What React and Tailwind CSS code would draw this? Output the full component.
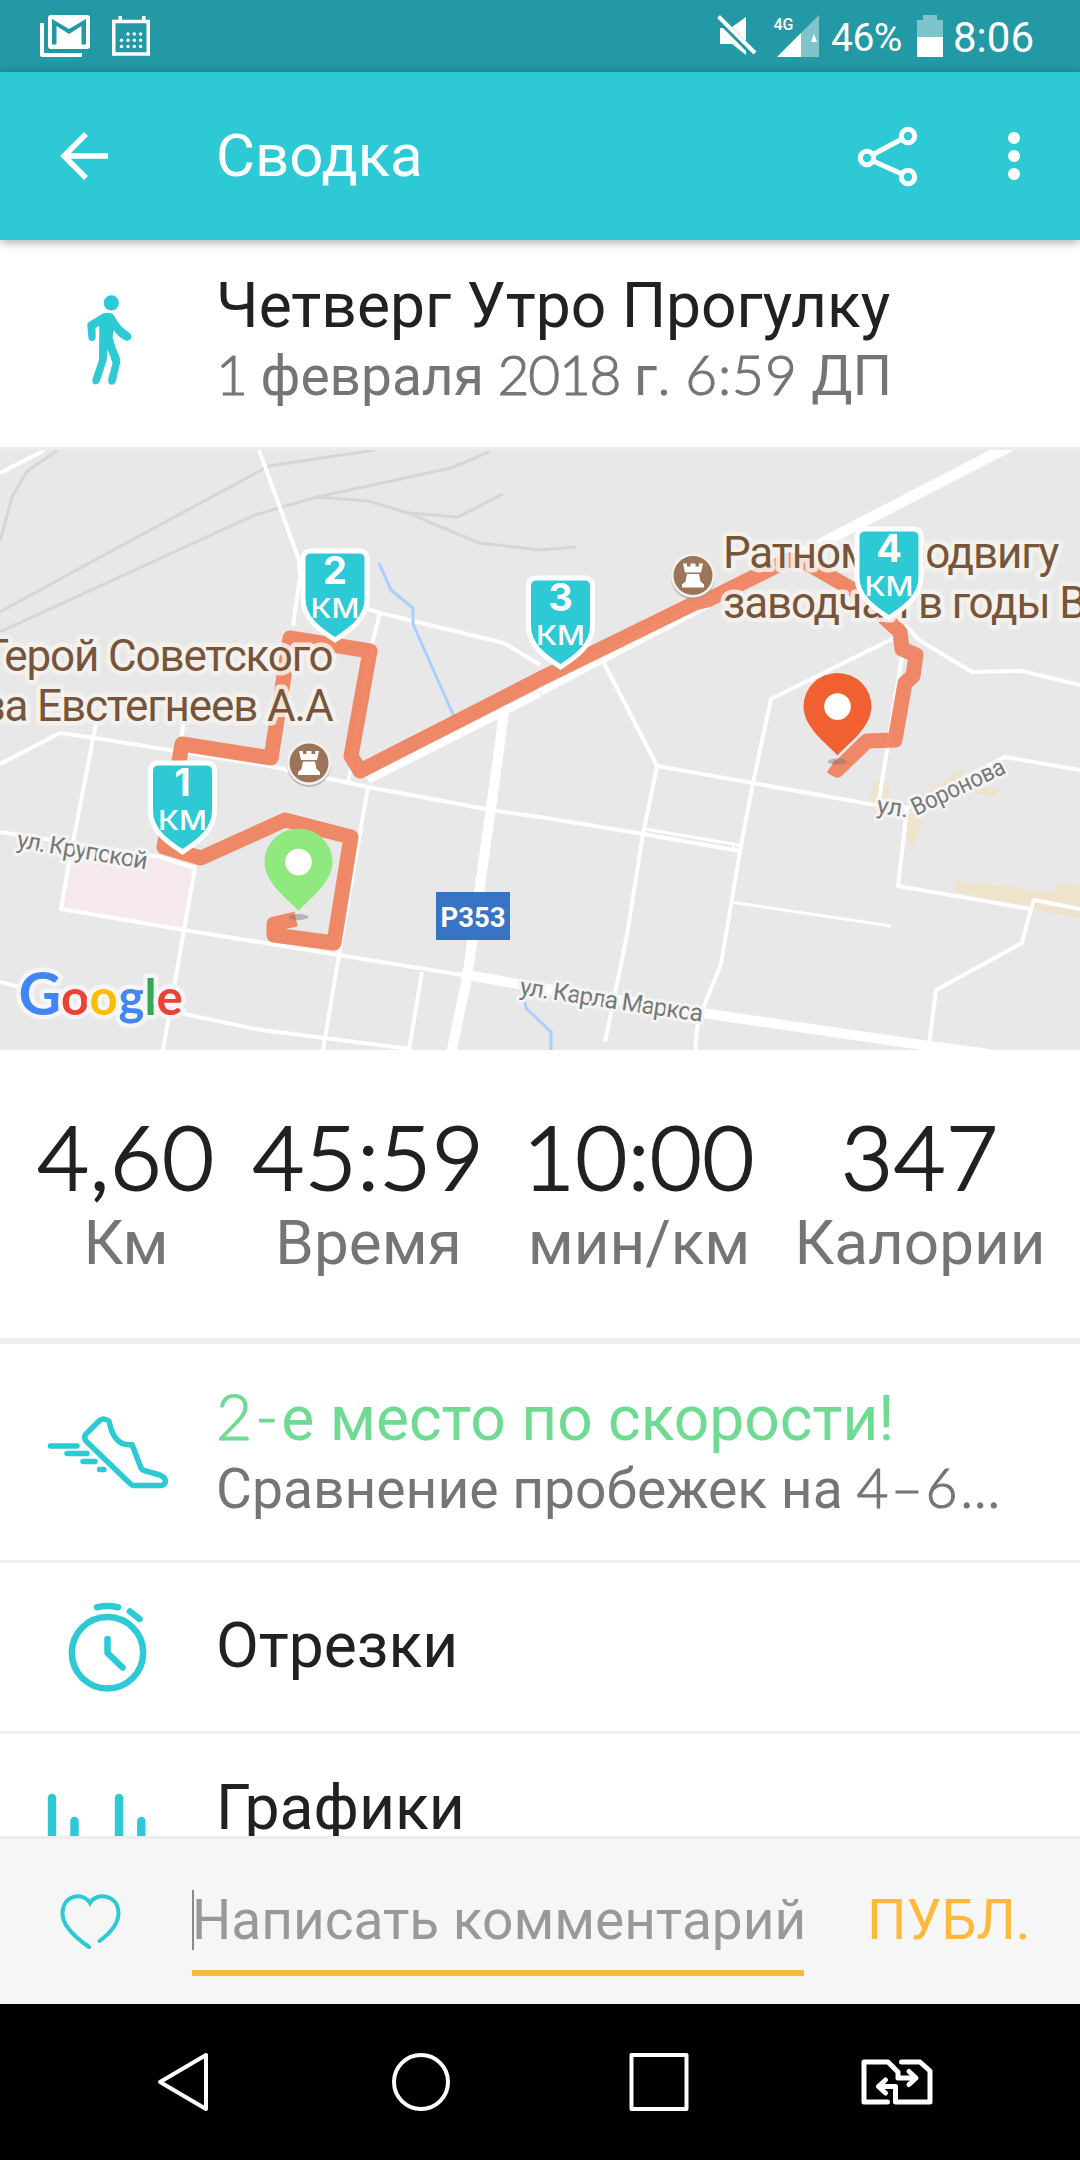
const CYAN = '#2dcad6'

const roads = [
  { w: 4, d: 'M0 473L45 450' },
  { w: 4, d: 'M259 450L299 560L300 576L293 626' },
  { w: 4, d: 'M368 609L380 613L504 643L540 665' },
  { w: 4, d: 'M380 613L373 640L348 784' },
  { w: 4, d: 'M0 764L60 733L95 738L269 766L368 787L491 810L540 817L643 834L740 851' },
  { w: 4, d: 'M98 713L69 863L61 909L184 930L339 955L462 975' },
  { w: 4, d: 'M0 832L160 857L195 868L184 930L163 1050' },
  { w: 4, d: 'M185 715L180 745' },
  { w: 4, d: 'M368 787L339 955L323 1050' },
  { w: 4, d: 'M422 972L409 1050' },
  { w: 4, d: 'M180 1013L255 1029L409 1049' },
  { w: 4, d: 'M0 982L24 988' },
  { w: 4, d: 'M604 663L657 766L643 834L627 935L605 1042' },
  { w: 4, d: 'M657 766L753 783L869 804L907 808L1005 757L1080 770' },
  { w: 4, d: 'M900 635L771 699L753 783L740 851L721 964L698 1021L695 1050' },
  { w: 3, d: 'M645 829L739 845M734 843L733 850' },
  { w: 3, d: 'M731 902L891 926' },
  { w: 4, d: 'M905 625L919 640L972 672L1022 671L1080 685' },
  { w: 4, d: 'M903 650L879 800' },
  { w: 4, d: 'M907 808L898 886L1031 909L1034 900L1080 909' },
  { w: 4, d: 'M1031 909L1022 943L936 990L929 1045' },
  { w: 8, d: 'M368 780L540 693' },
  { w: 11, d: 'M540 690L690 612L822 543L1010 446' },
  { w: 10, d: 'M505 705L491 808L467 978L451 1054' },
  { w: 10, d: 'M462 974L540 988L702 1013L929 1046L990 1054' },
]

const rails = [
  'M58 450L27 471L12 497L0 541',
  'M0 612L93 561L269 466L375 450',
  'M0 632L255 515L317 497L451 468L489 452',
  'M317 497L368 501L408 513L479 543L540 550L576 547',
  'M408 513L458 517L503 494',
]

const markers = [
  { n: '1', x: 182.5, y: 761 },
  { n: '2', x: 335, y: 549 },
  { n: '3', x: 560.5, y: 576 },
  { n: '4', x: 889, y: 527 },
]

const stats = [
  { value: '4,60', label: 'Км', width: 'w-[252px]' },
  { value: '45:59', label: 'Время', width: 'w-[233px]' },
  { value: '10:00', label: 'мин/км', width: 'w-[308px]' },
  { value: '347', label: 'Калории', width: 'w-[254px]' },
]

// Latin digits use a lighter face than the Cyrillic text
function Num({ children, className = '' }) {
  return <span className={`font-[Lato,sans-serif] font-light [-webkit-text-stroke:1.1px] ${className}`}>{children}</span>
}

function StatusBar() {
  return (
    <div className="h-[72px] bg-[#2499a6] flex items-center pl-10 pr-[46px] text-white">
      <svg className="w-[50px] h-[42px] shrink-0" viewBox="0 0 50 42">
        <path d="M2 8V40H42" fill="none" stroke="#fff" strokeWidth="4" strokeLinejoin="round" />
        <rect x="8" y="0" width="42" height="34" rx="3" fill="#fff" />
        <path d="M12 4L29 14L46 4V29.500H41.500V11L29 19L16.500 11V29.500H12Z" fill="#2499a6" />
      </svg>
      <svg className="w-[38px] h-10 ml-[22px] shrink-0" viewBox="0 0 38 40" fill="#fff">
        <rect x="1.750" y="5.500" width="34.500" height="32.500" fill="none" stroke="#fff" strokeWidth="3.500" />
        <rect x="6.500" y="0" width="3.500" height="6" />
        <rect x="30" y="0" width="3.500" height="6" />
        {[16, 22.3, 28.6].map((x) => <circle key={x} cx={x} cy="18" r="1.700" />)}
        {[9.5, 16, 22.3, 28.6].map((x) => (
          <g key={x}>
            <circle cx={x} cy="24.300" r="1.700" />
            <circle cx={x} cy="30.500" r="1.700" />
          </g>
        ))}
      </svg>
      <svg className="w-[104px] h-[42px] ml-auto shrink-0" viewBox="716 15 104 42">
        <path d="M719 28H722L745 51V55L731 44H719ZM731 27L745 17V41Z" fill="#fff" />
        <path d="M717.500 16.500L754 53" stroke="#fff" strokeWidth="4" />
        <path d="M776 57L818 15V57Z" fill="#fff" opacity="0.42" />
        <path d="M776 57L800 33V57Z" fill="#fff" />
        <path d="M810 42L813 34L816 42Z" fill="#fff" />
        <text x="772.500" y="30" fontSize="17" fontWeight="500" fill="#fff" textLength="20" lengthAdjust="spacingAndGlyphs">4G</text>
      </svg>
      <span className="ml-[10px] pt-1 text-[39px] leading-none w-[72px] tracking-[-0.5px]">46%</span>
      <svg className="w-[26px] h-[42px] ml-[14px] shrink-0" viewBox="0 0 26 42" fill="#fff">
        <path d="M6 0H20V5H26V22H0V5H6Z" opacity="0.42" />
        <rect y="22" width="26" height="20" />
      </svg>
      <span className="ml-[10px] pt-[3px] text-[42px] leading-none">8:06</span>
    </div>
  )
}

function AppBar() {
  return (
    <header className="relative z-10 h-[168px] bg-[#2dcad6] flex items-center pl-[60px] pr-[60px] shadow-[0_2px_10px_rgba(0,0,0,0.35)]">
      <svg className="w-12 h-12 shrink-0" viewBox="0 0 48 48" fill="none" stroke="#fff" strokeWidth="5.500">
        <path d="M26 2L4 24L26 46M3 24H48" />
      </svg>
      <h1 className="ml-[108px] text-[60px] leading-none text-white">Сводка</h1>
      <svg className="w-[60px] h-[62px] ml-auto shrink-0" viewBox="0 0 60 62" fill="none" stroke="#fff" strokeWidth="5">
        <circle cx="50" cy="11" r="6.700" />
        <circle cx="50" cy="52" r="6.700" />
        <circle cx="9" cy="33" r="6.700" />
        <path d="M15 29.500L44 14M15 36L44 49" />
      </svg>
      <svg className="w-3 h-12 ml-[90px] shrink-0" viewBox="0 0 12 48" fill="#fff">
        <circle cx="6" cy="6" r="6" />
        <circle cx="6" cy="24" r="6" />
        <circle cx="6" cy="42" r="6" />
      </svg>
    </header>
  )
}

function Summary() {
  return (
    <section className="h-[210px] border-b-[3px] border-[#ececec] flex">
      <div className="w-[216px] shrink-0 pt-[55px] pl-[86px]">
        <svg className="w-12 h-[92px]" viewBox="0 0 48 92" fill={CYAN}>
          <circle cx="25.300" cy="7.800" r="7.600" />
          <path d="M1.300 30Q1 28.300 3 27L17 18.500Q21 17 25 18.300Q27.500 19 29 22Q33 31 43.500 38Q47 41 44.500 44Q42 47 38.500 45Q31 41 28 35Q26.500 40 26.700 43Q29 52 33.500 62Q34.800 64.500 34 68L30 86Q28.500 90.500 24.500 89.500Q21.500 88.500 22.300 84L26.500 68Q24 60 21.300 54Q21.500 64 19.500 69L13.500 87Q11.500 90.500 8 89Q5.500 87.500 6.500 84L13 65L13.300 30.700L9.500 33L9.700 42Q9.500 46 6 46Q2.500 46 2.300 42Z" />
        </svg>
      </div>
      <div className="whitespace-nowrap">
        <h2 className="mt-[30px] text-[62.3px] leading-[72px] text-[#212121]">Четверг Утро Прогулку</h2>
        <p className="mt-[-3px] text-[55px] leading-[70px] text-[#757575]">
          <Num className="tracking-[-1px]">1</Num> февраля <Num className="tracking-[-1.2px]">2018</Num> г. <Num className="tracking-[0.9px]">6:59</Num> ДП
        </p>
      </div>
    </section>
  )
}

function Rook({ x, y }) {
  return (
    <g transform={`translate(${x} ${y})`}>
      <circle r="22" cy="2" fill="#999" opacity="0.6" />
      <circle r="22" fill="#f5f3f0" />
      <circle r="19.500" fill="#9c7459" />
      <path d="M-10 -12H-6V-9H-2.500V-12H2.500V-9H6V-12H10L8 -3H-8ZM-6 -1.500H6L7.500 6L11 9V12H-11V9L-7.500 6Z" fill="#fff" />
    </g>
  )
}

function Pin({ x, y, color }) {
  return (
    <g transform={`translate(${x} ${y})`}>
      <ellipse cy="6" rx="10" ry="3" fill="#777" opacity="0.45" />
      <path d="M0 0C-7 -9 -34 -27 -34 -49A34 33.500 0 0 1 34 -49C34 -27 7 -9 0 0Z" fill={color} />
      <circle cy="-49" r="13.300" fill="#fff" />
    </g>
  )
}

function KmMarker({ n, x, y }) {
  return (
    <g transform={`translate(${x} ${y})`} fill="#fff" textAnchor="middle" fontFamily="Inter, sans-serif">
      <path d="M-24 2H24Q32 2 32 10V50C32 72 10 84 0 91C-10 84 -32 72 -32 50V10Q-32 2 -24 2Z" fill={CYAN} stroke="#fff" strokeWidth="5" />
      <text y="35" fontSize="38" fontWeight="700">{n}</text>
      <text y="69" fontSize="27" fontWeight="500" textLength="49" lengthAdjust="spacingAndGlyphs">КМ</text>
    </g>
  )
}

function RouteMap() {
  return (
    <svg className="block w-[1080px] h-[600px]" viewBox="0 450 1080 600">
      <rect y="450" width="1080" height="600" fill="#e8e8e8" />
      <path d="M69 863L146 857L193 868L184 928L62 909Z" fill="#f6eaee" />
      <g fill="#f0e3cb">
        <path d="M874 780L890 783L888 800L869 812Z" />
        <path d="M908 814H921L916 845L907 844Z" />
        <path d="M905 808L960 769L967 776L970 788H1000L996 798L967 792L919 816Z" />
        <path d="M956 881L998 885L1053 893L1058 883L1080 885V919L953 891Z" />
      </g>
      <g fill="none" stroke="#d6d6d6" strokeWidth="3">
        {rails.map((d) => <path key={d} d={d} />)}
      </g>
      <g fill="none" stroke="#fff" strokeLinejoin="round">
        {roads.map((r) => <path key={r.d} d={r.d} strokeWidth={r.w} />)}
      </g>
      <path d="M379 563L391 590L413 608V624L456 721M523 990L526 1008L551 1032V1050" fill="none" stroke="#abcffd" strokeWidth="3" />
      <path
        d="M296 919L274 924V935L334 943L351 837L285 820L201 858L164 847L182 744L271 758L290 638L370 651L351 756L360 771L540 679L695 603L708 600L788 560L803 561L857 592L900 632L902 649L916 655L913 676L905 683L895 740L867 741L837 770L831 766"
        fill="none" stroke="#ef7a54" strokeOpacity="0.88" strokeWidth="15" strokeLinejoin="round"
      />
      <Rook x={309} y={763} />
      <Rook x={693} y={575.5} />
      <g fontSize="44" letterSpacing="-1.150" fill="#77553a" stroke="#f6f3ef" strokeWidth="9" strokeLinejoin="round" paintOrder="stroke" strokeOpacity="0.85">
        <text x="332.500" y="671" textAnchor="end">Герой Советского</text>
        <text x="332.500" y="720.500" textAnchor="end">за Евстегнеев А.А</text>
        <text x="723" y="567.500">Ратному подвигу</text>
        <text x="723" y="618">заводчан в годы В</text>
      </g>
      <g fontSize="24.500" fill="#777" stroke="#f4f4f4" strokeWidth="6" strokeLinejoin="round" paintOrder="stroke">
        <text transform="translate(16 847.500) rotate(9.500)" textLength="132">ул. Крупской</text>
        <text transform="translate(519 994.500) rotate(8.500)" textLength="185">ул. Карла Маркса</text>
        <text transform="translate(876 813) rotate(8)">ул.</text>
        <text transform="translate(916 816) rotate(-25.500)" textLength="101" lengthAdjust="spacingAndGlyphs">Воронова</text>
      </g>
      <rect x="436" y="892" width="74" height="48" fill="#3874c4" />
      <text x="473" y="927" fontSize="28.500" fontWeight="700" fill="#fff" textAnchor="middle" textLength="65" lengthAdjust="spacingAndGlyphs">P353</text>
      {markers.map((m) => <KmMarker key={m.n} {...m} />)}
      <Pin x={298.5} y={911} color="#8fe97f" />
      <Pin x={837.5} y={755.5} color="#f06030" />
      <text y="1015" fontSize="49" fontFamily="Lato, sans-serif" stroke="#f6f6f6" strokeWidth="9" strokeLinejoin="round" paintOrder="stroke" fontWeight="700">
        <tspan x="18.500" fill="#4285f4" fontSize="59">G</tspan>
        <tspan x="61" fill="#ea4335">o</tspan>
        <tspan x="89.500" fill="#fbbc05">o</tspan>
        <tspan x="118.500" fill="#4285f4">g</tspan>
        <tspan x="144.500" fill="#34a853">l</tspan>
        <tspan x="156.500" fill="#ea4335">e</tspan>
      </text>
    </svg>
  )
}

function Stats() {
  return (
    <section className="h-[294px] pt-[56px] border-b-[6px] border-[#eeeeee] flex text-center">
      {stats.map((s) => (
        <div key={s.label} className={`${s.width} shrink-0 flex flex-col items-center whitespace-nowrap`}>
          <span className="font-[Lato,sans-serif] font-light [-webkit-text-stroke:2.2px] text-[89px] tracking-[0.8px] leading-[100px] text-[#212121]">{s.value}</span>
          <span className="mt-[3px] text-[62px] leading-[68px] text-[#757575]">{s.label}</span>
        </div>
      ))}
    </section>
  )
}

function ShoeIcon() {
  return (
    <svg className="w-[122px] h-[76px]" viewBox="47 1414 122 76" fill="none" stroke={CYAN} strokeWidth="5.500" strokeLinecap="round" strokeLinejoin="round">
      <path d="M50.500 1446H77M67 1453.500H87M83 1461.500H95M99.500 1469.500H104" />
      <path d="M86 1434L99 1421Q103 1417 109 1421Q114 1447 132 1444.500L141 1468Q142 1470 144 1470.500L160 1475Q165 1477 165.500 1481Q165 1485.500 161 1485.500H134Q132 1485.500 130 1483.500L87 1442Q83 1438 86 1434Z" />
    </svg>
  )
}

function StopwatchIcon() {
  return (
    <svg className="w-[80px] h-[92px]" viewBox="68 1602 80 92" fill="none" stroke={CYAN} strokeWidth="6.500" strokeLinecap="round" strokeLinejoin="round">
      <circle cx="107.500" cy="1652.700" r="35.700" />
      <path d="M107.500 1639V1653L122.500 1667.500M97 1607.200Q107.500 1605 118 1607.200M130 1611.500L139.500 1619" />
    </svg>
  )
}

function BarsIcon() {
  return (
    <svg className="w-[100px] h-[46px]" viewBox="46 1790 100 46" stroke={CYAN} strokeWidth="8.400" strokeLinecap="round">
      <path d="M52 1798V1850M74.500 1821V1850M119 1798V1850M141.300 1821V1850" />
    </svg>
  )
}

function CommentBar() {
  return (
    <div className="h-[168px] border-t-[3px] border-[#ededed] bg-[#f6f6f6] flex items-start">
      <svg className="w-[62px] h-[58px] ml-[59px] mt-[54px] shrink-0" viewBox="59 1893 62 58" fill="none" stroke={CYAN} strokeWidth="4" strokeLinecap="round">
        <path d="M89 1947C76 1938 62 1926 62.500 1913C63 1894 84 1892 90 1903C96 1892 118 1894 118.500 1913C118.500 1924 109 1934 99.500 1941" />
      </svg>
      <div className="ml-[71px] mt-[51px] w-[612px] h-[86px] border-b-[6px] border-[#fdb93b] flex items-start">
        <div className="w-[2px] h-[60px] -mr-[2px] shrink-0 bg-[#8a8a8a]" />
        <span className="text-[55px] leading-[60px] text-[#999999] whitespace-nowrap">Написать комментарий</span>
      </div>
      <button className="ml-[63px] mt-[52px] text-[55.5px] leading-[60px] text-[#fdb93b]">ПУБЛ.</button>
    </div>
  )
}

function NavBar() {
  return (
    <nav className="h-[156px] bg-black flex items-center">
      <svg className="w-[1080px] h-[156px]" viewBox="0 2004 1080 156" fill="none" stroke="#fff" strokeWidth="4" strokeLinejoin="round">
        <path d="M160 2082L206 2055V2109Z" />
        <circle cx="421" cy="2082" r="27" />
        <rect x="631.500" y="2055" width="55" height="54" />
        <g strokeWidth="5" strokeLinecap="round">
          <path d="M887.500 2102H864V2062H888L898 2072V2078H915M901.500 2062H920L930 2071V2102H895.500V2086.500H879" />
          <path d="M909 2071.500L916 2078L909 2084.500M885.500 2080L878.500 2086.500L885.500 2093" />
        </g>
      </svg>
    </nav>
  )
}

export default function App() {
  return (
    <div className="w-[1080px] h-[2160px] bg-white overflow-hidden flex flex-col font-[Roboto,sans-serif]">
      <StatusBar />
      <AppBar />
      <main className="h-[1596px] overflow-hidden">
        <Summary />
        <RouteMap />
        <Stats />
        <section className="h-[219px] border-b-[3px] border-[#eeeeee] flex">
          <div className="w-[216px] shrink-0 pl-[47px] pt-[70px]"><ShoeIcon /></div>
          <div className="whitespace-nowrap">
            <h3 className="mt-[36px] text-[62.3px] leading-[72px] text-[#6fda92]"><Num className="tracking-[3px]">2-</Num>е место по скорости!</h3>
            <p className="mt-[-3px] text-[55.2px] leading-[70px] text-[#757575]">Сравнение пробежек на <Num className="tracking-[2.6px]">4–6…</Num></p>
          </div>
        </section>
        <section className="h-[171px] border-b-[3px] border-[#eeeeee] flex">
          <div className="w-[216px] shrink-0 pl-[68px] pt-[39px]"><StopwatchIcon /></div>
          <h3 className="mt-[47px] text-[62.3px] leading-[72px] text-[#212121]">Отрезки</h3>
        </section>
        <section className="h-[171px] flex">
          <div className="w-[216px] shrink-0 pl-[46px] pt-[56px]"><BarsIcon /></div>
          <h3 className="mt-[38px] text-[62.5px] leading-[72px] text-[#212121]">Графики</h3>
        </section>
      </main>
      <CommentBar />
      <NavBar />
    </div>
  )
}
